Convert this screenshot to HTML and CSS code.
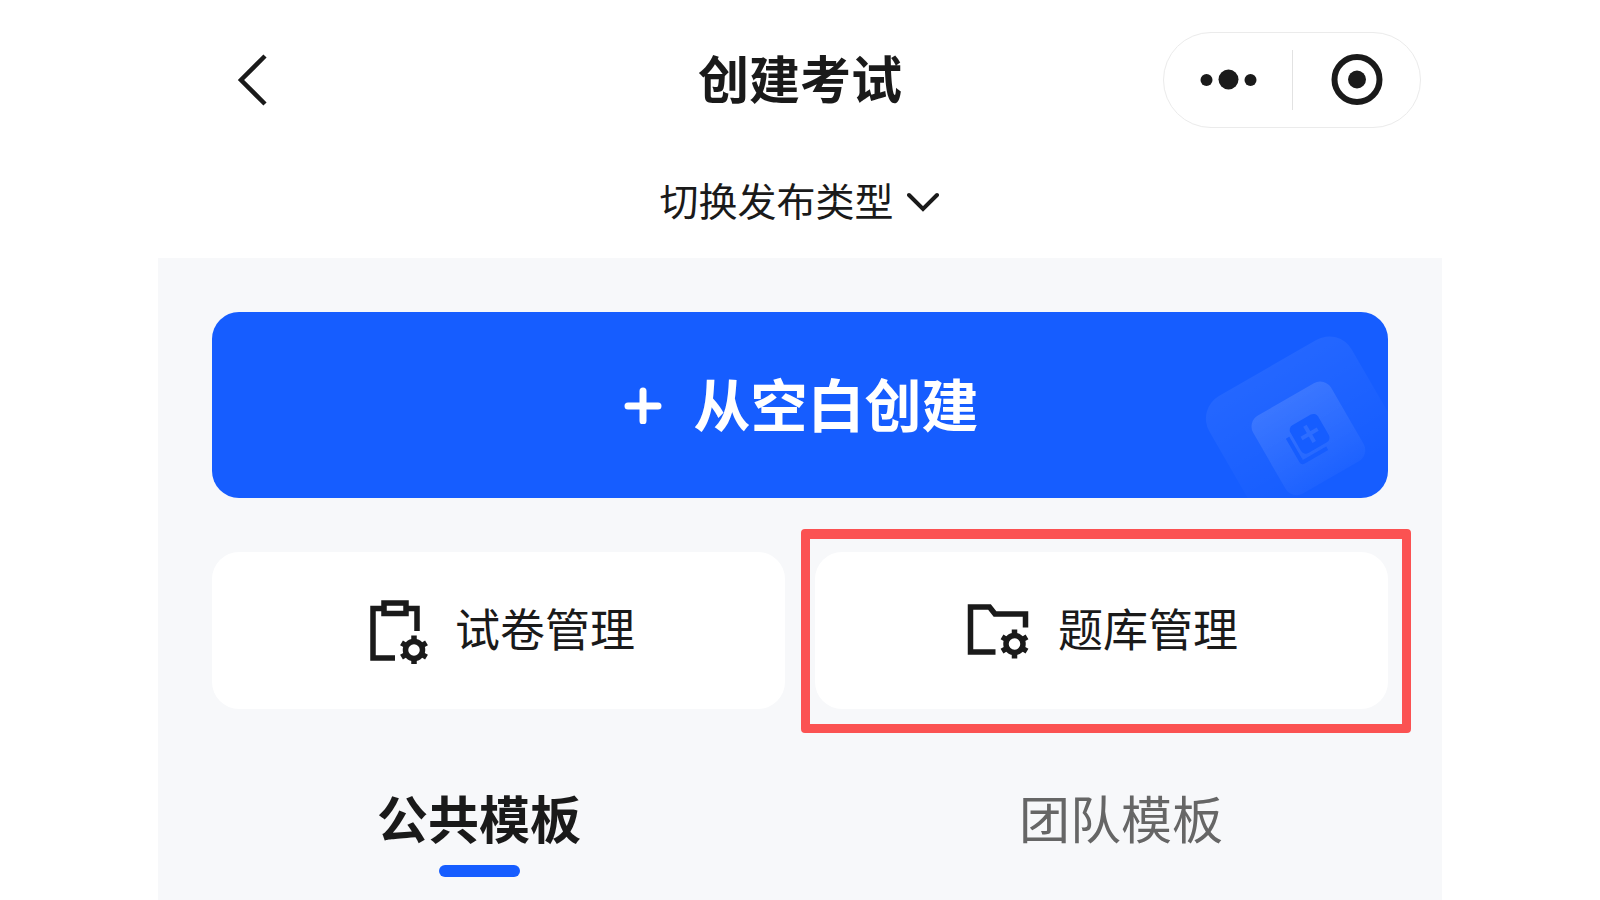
FILE: index.html
```
<!DOCTYPE html>
<html lang="zh-CN">

<head>
  <meta charset="UTF-8">
  <meta name="viewport" content="width=device-width, initial-scale=1.0">
  <title>创建考试</title>
  <link rel="stylesheet" href="styles.css">
</head>

<body>
  <div class="app">
    <header class="navbar">
      <div class="nav-side">
        <button type="button" class="back-btn" aria-label="返回">
          <svg width="32" height="54" viewBox="0 0 32 54" fill="none" stroke="currentColor" stroke-width="4.5">
            <path d="M29 3 L5 27 L29 51" />
          </svg>
        </button>
      </div>
      <h1 class="label">创建考试</h1>
      <div class="nav-side nav-right">
        <div class="capsule">
          <button type="button" class="capsule-btn" aria-label="更多">
            <svg width="58" height="54" viewBox="0 0 58 54" fill="currentColor">
              <circle cx="7.5" cy="27" r="6" />
              <circle cx="29.5" cy="26.5" r="10" />
              <circle cx="51.5" cy="27" r="6" />
            </svg>
          </button>
          <button type="button" class="capsule-btn" aria-label="关闭">
            <svg width="54" height="54" viewBox="0 0 54 54">
              <circle cx="28" cy="26.5" r="22.5" fill="none" stroke="currentColor" stroke-width="6" />
              <circle cx="28" cy="26.5" r="9" fill="currentColor" />
            </svg>
          </button>
        </div>
      </div>
    </header>

    <button type="button" class="type-switch">
      <span class="label">切换发布类型</span>
      <svg width="34" height="22" viewBox="0 0 34 22" fill="none" stroke="currentColor" stroke-width="4" stroke-linecap="round">
        <path d="M2 4 L16 18 L30 4" />
      </svg>
    </button>

    <main class="content">
      <button type="button" class="create-btn">
        <svg width="40" height="38" viewBox="0 0 40 38" stroke="currentColor" stroke-width="7" stroke-linecap="round">
          <path d="M21 5 V35 M6 20 H36" />
        </svg>
        <span class="label">从空白创建</span>
        <svg class="create-deco" width="216" height="186" viewBox="-24 36 648 558" aria-hidden="true">
          <defs>
            <linearGradient id="fade-large" x1="0" y1="0" x2="0" y2="1">
              <stop offset="0" stop-color="#fff" stop-opacity="0.06" />
              <stop offset="0.8" stop-color="#fff" stop-opacity="0" />
            </linearGradient>
            <linearGradient id="fade-small" x1="0" y1="0" x2="0" y2="1">
              <stop offset="0" stop-color="#fff" stop-opacity="0.12" />
              <stop offset="1" stop-color="#fff" stop-opacity="0.03" />
            </linearGradient>
          </defs>
          <g transform="rotate(-30)">
            <rect x="-121" y="308" width="493" height="493" rx="78" fill="url(#fade-large)" />
            <rect x="-9" y="417" width="270" height="270" rx="38" fill="url(#fade-small)" />
            <rect x="88" y="494" width="96" height="96" rx="16" fill="#165dff" />
            <path d="M73 519 V600 Q73 606 79 606 H160" fill="none" stroke="#165dff" stroke-width="12" />
            <path d="M136 514 V570 M108 542 H164" stroke="#2d6dff" stroke-width="12" />
          </g>
        </svg>
      </button>

      <div class="cards">
        <a class="card" href="#papers">
          <svg width="66" height="66" viewBox="0 0 66 66" fill="none" stroke="currentColor" stroke-width="5.5">
            <path d="M21 10.5 H11 V60 H33 M46 10.5 H55 V33" />
            <rect x="22" y="5" width="22" height="10.5" />
            <g transform="translate(52 52)">
              <circle r="8.5" />
              <path d="M0 -9 V-14.5 M0 9 V14.5 M8 -4.5 L12.5 -7.2 M8 4.5 L12.5 7.2 M-8 -4.5 L-12.5 -7.2 M-8 4.5 L-12.5 7.2" />
            </g>
          </svg>
          <span class="label">试卷管理</span>
        </a>
        <a class="card card-marked" href="#questions">
          <svg width="66" height="66" viewBox="0 0 66 66" fill="none" stroke="currentColor" stroke-width="5.5">
            <path d="M30.5 54 H5.5 V9 H24.5 L30 16 H60.5 V29.5" />
            <g transform="translate(49.5 46)">
              <circle r="8.5" />
              <path d="M0 -9 V-14.5 M0 9 V14.5 M8 -4.5 L12.5 -7.2 M8 4.5 L12.5 7.2 M-8 -4.5 L-12.5 -7.2 M-8 4.5 L-12.5 7.2" />
            </g>
          </svg>
          <span class="label">题库管理</span>
        </a>
      </div>

      <nav class="tabs">
        <a class="tab active" href="#public">公共模板</a>
        <a class="tab" href="#team">团队模板</a>
      </nav>
    </main>
  </div>
</body>

</html>
```
FILE: styles.css
```
* {
  margin: 0;
  padding: 0;
  box-sizing: border-box;
}

body {
  background-color: #fff;
  color: #1a1a1a;
  font-family: "Noto Sans CJK SC", sans-serif;
}

button {
  border: none;
  background: none;
  color: inherit;
  font: inherit;
  cursor: pointer;
}

a {
  color: inherit;
  text-decoration: none;
}

svg {
  display: block;
  flex-shrink: 0;
}

/* the CJK font sits low in its line box */
.label {
  padding-bottom: 6px;
}

.app {
  display: flex;
  flex-direction: column;
  max-width: 1284px;
  min-height: 100vh;
  margin: 0 auto;
}

/* top bar */
.navbar {
  display: flex;
  align-items: center;
  height: 160px;
  padding: 0 21px;
}

.nav-side {
  flex: 1;
  display: flex;
}

.nav-right {
  justify-content: flex-end;
}

.navbar h1 {
  font-size: 51px;
  line-height: 72px;
  font-weight: bold;
}

.back-btn {
  padding: 12px 57px;
}

.capsule {
  display: flex;
  align-items: center;
  width: 258px;
  height: 96px;
  border: 1px solid #ebebeb;
  border-radius: 48px;
}

.capsule-btn {
  flex: 1;
  display: flex;
  justify-content: center;
  align-items: center;
  height: 60px;
}

.capsule-btn + .capsule-btn {
  border-left: 1px solid #e2e2e2;
}

.type-switch {
  display: flex;
  justify-content: center;
  align-items: center;
  gap: 13px;
  height: 98px;
  padding-bottom: 14px;
  font-size: 39px;
}

/* grey area */
.content {
  flex: 1;
  padding: 54px 0 0;
  background-color: #f7f8fa;
}

.create-btn {
  position: relative;
  display: flex;
  justify-content: center;
  align-items: center;
  gap: 32px;
  width: calc(100% - 108px);
  height: 186px;
  margin: 0 54px;
  border-radius: 27px;
  background-color: #165dff;
  color: #fff;
  font-size: 57px;
  font-weight: bold;
  overflow: hidden;
}

.create-deco {
  position: absolute;
  top: 0;
  right: 0;
}

.cards {
  display: grid;
  grid-template-columns: 1fr 1fr;
  gap: 30px;
  margin: 54px 54px 0;
}

.card {
  position: relative;
  display: flex;
  justify-content: center;
  align-items: center;
  gap: 27px;
  height: 157px;
  border-radius: 27px;
  background-color: #fff;
  font-size: 45px;
}

/* red frame round the card */
.card-marked::after {
  content: "";
  position: absolute;
  top: -23px;
  right: -23px;
  bottom: -24px;
  left: -14px;
  border: 9px solid #fb5252;
  border-top-width: 10px;
  border-radius: 4px;
}

.tabs {
  display: flex;
  margin-top: 72px;
}

.tab {
  flex: 1;
  display: flex;
  flex-direction: column;
  align-items: center;
  gap: 12px;
  color: #666;
  font-size: 51px;
  line-height: 72px;
}

.tab.active {
  color: #1a1a1a;
  font-weight: bold;
}

.tab.active::after {
  content: "";
  width: 81px;
  height: 12px;
  border-radius: 6px;
  background-color: #165dff;
}
```
